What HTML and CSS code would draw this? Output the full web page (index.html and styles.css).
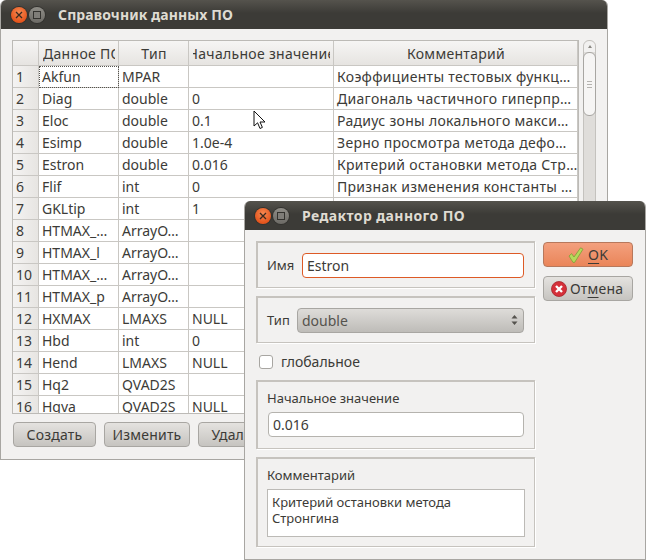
FILE: index.html
```html
<!DOCTYPE html>
<html>
<head>
    <title>Справочник данных ПО</title>
    <link rel="stylesheet" href="styles.css">
</head>
<body>

<section class="window main-window">
    <header class="titlebar">
        <span class="win-btn close"><svg width="8" height="8" viewBox="0 0 8 8"><path d="M1 1L7 7M7 1L1 7" stroke="#3a2a20" stroke-width="1.3"/></svg></span>
        <span class="win-btn maxi"><i></i></span>
        <span class="win-title title-main">Справочник данных ПО</span>
    </header>
    <div class="main-body">
        <div class="table-row">
            <div class="table-clip">
                <table class="data-table">
                    <colgroup>
                        <col class="c-num"><col class="c-name"><col class="c-type"><col class="c-init"><col class="c-comment">
                    </colgroup>
                    <thead>
                        <tr>
                            <th></th>
                            <th><div class="th-in th-left">Данное ПО</div></th>
                            <th><div class="th-in">Тип</div></th>
                            <th><div class="th-in">Начальное значение</div></th>
                            <th><div class="th-in">Комментарий</div></th>
                        </tr>
                    </thead>
                    <tbody>
                        <tr><th>1</th><td class="focused">Akfun</td><td>MPAR</td><td></td><td class="comment">Коэффициенты тестовых функц…</td></tr>
                        <tr><th>2</th><td>Diag</td><td>double</td><td>0</td><td class="comment">Диагональ частичного гиперпр…</td></tr>
                        <tr><th>3</th><td>Eloc</td><td>double</td><td>0.1</td><td class="comment">Радиус зоны локального макси…</td></tr>
                        <tr><th>4</th><td>Esimp</td><td>double</td><td>1.0e-4</td><td class="comment">Зерно просмотра метода дефо…</td></tr>
                        <tr><th>5</th><td>Estron</td><td>double</td><td>0.016</td><td class="comment">Критерий остановки метода Стр…</td></tr>
                        <tr><th>6</th><td>Flif</td><td>int</td><td>0</td><td class="comment">Признак изменения константы …</td></tr>
                        <tr><th>7</th><td>GKLtip</td><td>int</td><td>1</td><td></td></tr>
                        <tr><th>8</th><td>HTMAX_…</td><td>ArrayO…</td><td></td><td></td></tr>
                        <tr><th>9</th><td>HTMAX_l</td><td>ArrayO…</td><td></td><td></td></tr>
                        <tr><th>10</th><td>HTMAX_…</td><td>ArrayO…</td><td></td><td></td></tr>
                        <tr><th>11</th><td>HTMAX_p</td><td>ArrayO…</td><td></td><td></td></tr>
                        <tr><th>12</th><td>HXMAX</td><td>LMAXS</td><td>NULL</td><td></td></tr>
                        <tr><th>13</th><td>Hbd</td><td>int</td><td>0</td><td></td></tr>
                        <tr><th>14</th><td>Hend</td><td>LMAXS</td><td>NULL</td><td></td></tr>
                        <tr><th>15</th><td>Hq2</td><td>QVAD2S</td><td></td><td></td></tr>
                        <tr><th>16</th><td>Hqva</td><td>QVAD2S</td><td>NULL</td><td></td></tr>
                    </tbody>
                </table>
            </div>
            <div class="scrollbar">
                <div class="scroll-up"></div>
                <div class="scroll-thumb"><i></i><i></i><i></i></div>
            </div>
        </div>
        <div class="main-buttons">
            <button class="btn btn-create">Создать</button>
            <button class="btn btn-edit">Изменить</button>
            <button class="btn btn-del">Удалить</button>
        </div>
    </div>
</section>

<svg class="cursor" width="14" height="20" viewBox="0 0 14 20"><path d="M1 1V16L4.6 12.8L7 18.5L9.4 17.4L7 12H12Z" fill="#fff" stroke="#111" stroke-width="1"/></svg>

<section class="window dialog">
    <header class="titlebar">
        <span class="win-btn close"><svg width="8" height="8" viewBox="0 0 8 8"><path d="M1 1L7 7M7 1L1 7" stroke="#3a2a20" stroke-width="1.3"/></svg></span>
        <span class="win-btn maxi"><i></i></span>
        <span class="win-title title-dialog">Редактор данного ПО</span>
    </header>
    <div class="dialog-body">
        <div class="dialog-left">
            <div class="group group-row group-name">
                <label class="field-label">Имя</label>
                <input class="text-input active" type="text" value="Estron">
            </div>
            <div class="group group-row group-type">
                <label class="field-label">Тип</label>
                <div class="combo">
                    <span>double</span>
                    <svg width="7" height="12" viewBox="0 0 7 12"><path d="M3.5 1L6.5 4.5H.5ZM3.5 11L.5 7.5H6.5Z" fill="#55534e"/></svg>
                </div>
            </div>
            <label class="check-row"><span class="checkbox"></span>глобальное</label>
            <div class="group group-col group-init">
                <label class="field-label">Начальное значение</label>
                <input class="text-input" type="text" value="0.016">
            </div>
            <div class="group group-col group-comment">
                <label class="field-label">Комментарий</label>
                <div class="text-area">Критерий остановки метода<br>Стронгина</div>
            </div>
        </div>
        <div class="dialog-right">
            <button class="btn btn-ok">
                <svg width="16" height="16" viewBox="0 0 16 16"><path d="M1 9L3.6 6.6L6 10L12.6 .8L15 2.2L6.6 15.4H5Z" fill="#b5d95a" stroke="#7f9e38" stroke-width=".8"/></svg>
                <span><u>O</u>K</span>
            </button>
            <button class="btn btn-cancel">
                <svg width="16" height="16" viewBox="0 0 16 16"><circle cx="8" cy="8" r="7.5" fill="#d5303a" stroke="#a3232b" stroke-width=".8"/><path d="M5 5L11 11M11 5L5 11" stroke="#fff" stroke-width="2.4"/></svg>
                <span>От<u>м</u>ена</span>
            </button>
        </div>
    </div>
</section>

</body>
</html>
```

FILE: styles.css
```css
* {
    box-sizing: border-box;
}

body {
    margin: 0;
    width: 646px;
    height: 560px;
    overflow: hidden;
    background: #fff;
    font-family: "Noto Sans", sans-serif;
    font-size: 13px;
    color: #3c3b37;
    position: relative;
}

.window {
    position: absolute;
    background: #f2f1f0;
    border: 1px solid #a8a6a2;
    border-top: none;
    border-radius: 6px 6px 0 0;
    overflow: hidden;
}

.main-window {
    left: 0;
    top: 0;
    width: 608px;
    height: 460px;
}

.dialog {
    left: 244px;
    top: 201px;
    width: 402px;
    height: 359px;
}

.titlebar {
    height: 29px;
    margin: 0 -1px;
    padding-left: 11px;
    display: flex;
    align-items: center;
    background: linear-gradient(#55534d, #3c3b37 45%, #3c3b37);
}

.win-btn {
    width: 16px;
    height: 16px;
    border-radius: 50%;
    display: flex;
    align-items: center;
    justify-content: center;
}

.win-btn.close {
    background: radial-gradient(circle at 50% 35%, #f78a52, #e5551d 70%);
    box-shadow: 0 0 0 1px #33322e;
}

.win-btn.maxi {
    margin-left: 2px;
    background: linear-gradient(#8f8d87, #6c6a65);
    box-shadow: 0 0 0 1px #33322e;
}

.win-btn.maxi i {
    width: 8px;
    height: 8px;
    border: 1px solid #33322e;
    background: #7f7d78;
}

.win-title {
    margin-left: 13px;
    font-size: 14px;
    font-weight: 700;
    color: #dfdbd2;
    white-space: nowrap;
}

.title-main {
    letter-spacing: .1px;
}

.title-dialog {
    letter-spacing: .4px;
}

.main-body {
    padding: 11px 0 0 11px;
}

.table-row {
    display: flex;
    gap: 4px;
}

.table-clip {
    width: 567px;
    height: 374px;
    overflow: hidden;
    border: 1px solid #bcbab6;
    background: #fff;
}

.data-table {
    width: 565px;
    table-layout: fixed;
    border-collapse: separate;
    border-spacing: 0;
    font-size: 14px;
}

.c-num { width: 26px; }
.c-name { width: 80px; }
.c-type { width: 70px; }
.c-init { width: 145px; }
.c-comment { width: 244px; }

.data-table thead th {
    height: 25px;
    padding: 0 3px 0 4px;
    font-weight: 400;
    font-size: 14px;
    letter-spacing: .3px;
    background: linear-gradient(#f6f5f4, #e6e4e1);
    border-right: 1px solid #c9c7c3;
    border-bottom: 1px solid #c9c7c3;
}

.th-in {
    display: flex;
    justify-content: center;
    overflow: hidden;
    white-space: nowrap;
}

.th-in.th-left {
    justify-content: flex-start;
}

.data-table tbody th {
    height: 22px;
    padding: 0 0 0 3px;
    font-weight: 400;
    text-align: left;
    background: linear-gradient(90deg, #f4f3f2, #e7e5e2);
    border-right: 1px solid #c9c7c3;
    border-bottom: 1px solid #c9c7c3;
}

.data-table td {
    height: 22px;
    padding: 0 3px;
    white-space: nowrap;
    overflow: hidden;
    border-right: 1px solid #c9c7c3;
    border-bottom: 1px solid #c9c7c3;
}

.data-table td.comment {
    letter-spacing: .3px;
}

.data-table td.focused {
    outline: 1px dotted #55534e;
    outline-offset: -1px;
}

.scrollbar {
    width: 13px;
    height: 305px;
    border: 1px solid #c4c2be;
    border-radius: 6px;
    background: #dfddda;
}

.scroll-up {
    height: 11px;
    background: #f2f1f0;
    border-radius: 6px 6px 0 0;
}

.scroll-up::before {
    content: "";
    display: block;
    width: 0;
    margin: 0 auto;
    position: relative;
    top: 4px;
    border: 2px solid transparent;
    border-bottom: 3px solid #8a8883;
    border-top: none;
}

.scroll-thumb {
    width: 13px;
    height: 64px;
    margin-left: -1px;
    border: 1px solid #a8a6a2;
    border-radius: 6px;
    background: #f6f5f4;
    display: flex;
    flex-direction: column;
    align-items: center;
    justify-content: center;
    gap: 2px;
}

.scroll-thumb i {
    width: 5px;
    height: 1px;
    background: #b5b3af;
}

.main-buttons {
    display: flex;
    gap: 8px;
    margin-top: 8px;
    padding-left: 1px;
}

.btn {
    height: 25px;
    padding: 0;
    display: flex;
    align-items: center;
    justify-content: center;
    gap: 3px;
    font-family: inherit;
    font-size: 14px;
    letter-spacing: .2px;
    color: #3c3b37;
    background: linear-gradient(#e4e2df, #c6c4c0);
    border: 1px solid #a8a6a2;
    border-radius: 4px;
    white-space: nowrap;
}

.btn-create { width: 83px; }
.btn-edit { width: 86px; }
.btn-del { width: 83px; }

.dialog-body {
    padding: 11px 12px 0 11px;
    display: flex;
    gap: 8px;
}

.dialog-left {
    width: 279px;
    display: flex;
    flex-direction: column;
}

.dialog-right {
    width: 90px;
    display: flex;
    flex-direction: column;
    gap: 9px;
    padding-top: 1px;
}

.group {
    border: 1px solid #c6c3be;
    border-top-width: 2px;
    border-left-width: 2px;
    box-shadow: 1px 1px 0 #fff;
}

.group-row {
    height: 47px;
    padding: 0 10px 0 9px;
    display: flex;
    align-items: center;
    justify-content: space-between;
}

.group-type {
    margin-top: 8px;
}

.group-col {
    padding: 8px 9px 0 9px;
    display: flex;
    flex-direction: column;
}

.group-init {
    height: 69px;
    gap: 6px;
}

.group-init .text-input {
    margin: 0 1px;
}

.group-comment {
    height: 90px;
    margin-top: 8px;
    gap: 6px;
}

.field-label {
    font-size: 13px;
    line-height: 16px;
}

.text-input {
    height: 25px;
    padding: 0 4px;
    font-family: inherit;
    font-size: 14px;
    color: #3c3b37;
    background: #fff;
    border: 1px solid #b5b3ae;
    border-radius: 4px;
    outline: none;
}

.group-name .text-input {
    width: 222px;
}

.text-input.active {
    border-color: #dd5a26;
}

.combo {
    width: 227px;
    height: 25px;
    padding: 0 5px 0 4px;
    display: flex;
    align-items: center;
    justify-content: space-between;
    font-size: 14px;
    color: #55534e;
    background: linear-gradient(#dedcd9, #bebcb8);
    border: 1px solid #a8a6a2;
    border-radius: 4px;
}

.check-row {
    height: 37px;
    padding-left: 3px;
    display: flex;
    align-items: center;
    gap: 8px;
    font-size: 14px;
}

.checkbox {
    width: 14px;
    height: 14px;
    background: #fff;
    border: 1px solid #a8a6a2;
    border-radius: 3px;
}

.text-area {
    height: 48px;
    padding: 4px;
    font-size: 13px;
    line-height: 16px;
    background: #fff;
    border: 1px solid #bcbab6;
}

.btn-ok {
    width: 90px;
    background: linear-gradient(#f3a07e, #ea8559);
    border-color: #b7785c;
    gap: 4px;
}

.btn-cancel {
    width: 90px;
    justify-content: flex-start;
    padding-left: 7px;
}

.btn u {
    text-underline-offset: 3px;
}

.cursor {
    position: absolute;
    left: 253px;
    top: 110px;
}
```
